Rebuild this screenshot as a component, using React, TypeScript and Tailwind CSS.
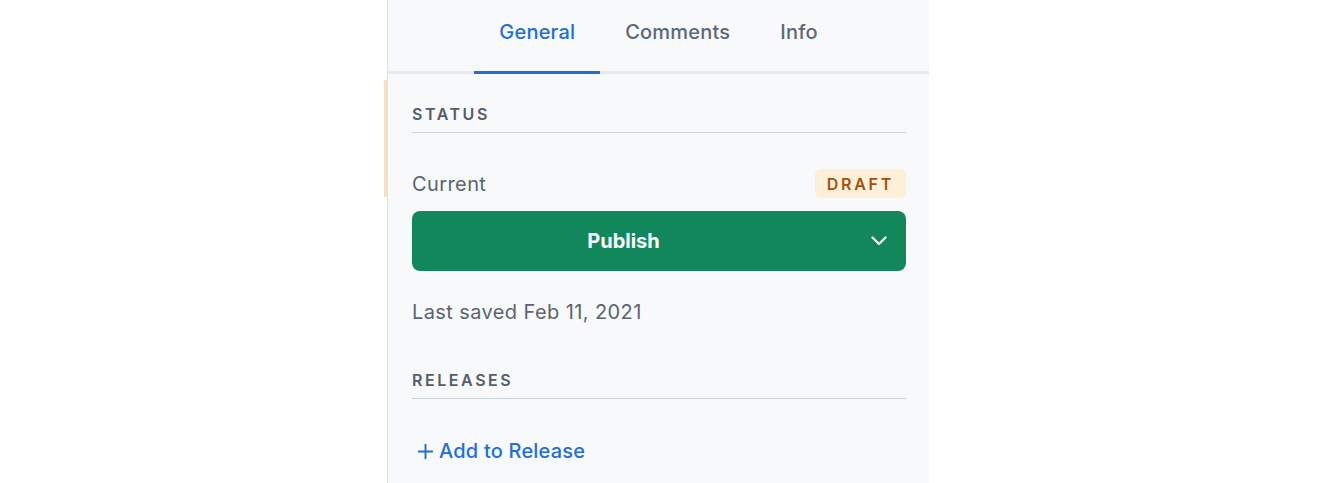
import { Plus } from "lucide-react";

const tabs = ["General", "Comments", "Info"];

function SectionTitle({ children }: { children: string }) {
  return (
    <div className="border-b border-[#cdd4dc] pb-2 text-[16px] leading-5 font-semibold tracking-[0.16em] text-[#545d69]">
      {children}
    </div>
  );
}

export default function App() {
  return (
    <div className="flex h-[483px] w-[1320px] bg-white font-['Inter',sans-serif]">
      {/* left side, just the highlight strip at the edge */}
      <div className="flex w-[387px] justify-end">
        <div className="mt-[80px] h-[117px] w-[3px] bg-[#f8dfc4]" />
      </div>

      <aside className="flex w-[542px] flex-col border-l border-[#dde2e8] bg-[#f7f9fb]">
        <nav className="flex h-[74px] justify-center border-b-[3px] border-[#e6e9ed]">
          {tabs.map((t, i) => (
            <button
              key={t}
              type="button"
              className={
                i === 0
                  ? "-mb-[3px] border-b-[3px] border-[#1f6fd5] px-[25px] pb-[8px] text-[20px] font-medium tracking-[0.01em] text-[#1f6fd5]"
                  : "-mb-[3px] border-b-[3px] border-transparent px-[25px] pb-[8px] text-[20px] font-medium tracking-[0.01em] text-[#5d6876]"
              }>
              {t}
            </button>
          ))}
        </nav>

        <div className="flex flex-col pr-[23px] pl-6">
          <div className="mt-[30px]">
            <SectionTitle>STATUS</SectionTitle>
          </div>

          <div className="mt-[36px] flex h-[29px] items-center justify-between">
            <span className="pt-[1px] text-[20px] leading-7 tracking-[0.02em] text-[#5a6472]">Current</span>
            <span className="flex h-[29px] items-center rounded-md bg-[#fdf0d9] px-[12px] text-[16px] font-semibold tracking-[0.17em] text-[#a4500e]">
              DRAFT
            </span>
          </div>

          <div className="mt-[13px] flex h-[60px] rounded-lg bg-[#13875c] text-white">
            <button type="button" className="flex-1 text-[20px] font-bold">
              Publish
            </button>
            <button type="button" className="flex w-[71px] items-center justify-end pr-[19px]">
              <svg width="16" height="10" viewBox="0 0 16 10" fill="none">
                <path
                  d="M1.5 1.5 8 8l6.5-6.5"
                  stroke="currentColor"
                  strokeWidth="2.2"
                  strokeLinecap="round"
                  strokeLinejoin="round"
                />
              </svg>
            </button>
          </div>

          <p className="mt-[27px] text-[20px] leading-7 tracking-[0.02em] text-[#5a6472]">
            Last saved Feb 11, 2021
          </p>

          <div className="mt-[44px]">
            <SectionTitle>RELEASES</SectionTitle>
          </div>

          <button
            type="button"
            className="mt-[38px] flex items-center gap-[2px] self-start pl-[2px] text-[20px] leading-7 font-medium tracking-[0.01em] text-[#1f6fd5]">
            <Plus className="h-[23px] w-[23px]" strokeWidth={2} />
            Add to Release
          </button>
        </div>
      </aside>

      <div className="flex-1" />
    </div>
  );
}
